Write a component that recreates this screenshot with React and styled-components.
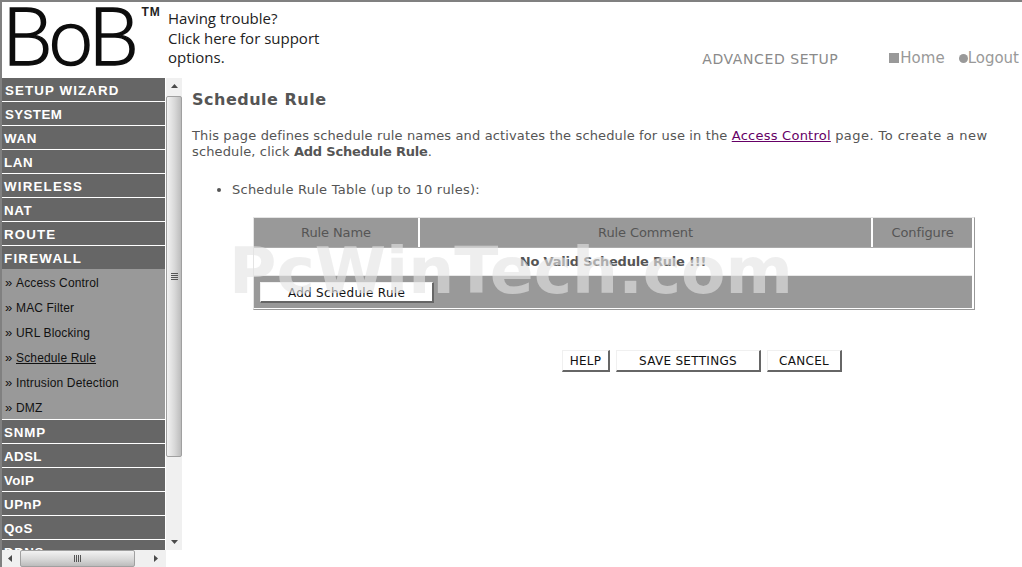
import React from "react";
import styled, { createGlobalStyle } from "styled-components";

const GlobalStyle = createGlobalStyle`
  html, body {
    margin: 0;
    padding: 0;
    background: #fff;
    overflow: hidden;
  }
`;

const topItems = [
  { label: "SETUP WIZARD", spacing: 1.1, indent: 3 },
  { label: "SYSTEM", spacing: 0.4, indent: 3 },
  { label: "WAN", spacing: 0.6 },
  { label: "LAN", spacing: 0.6 },
  { label: "WIRELESS", spacing: 1.2 },
  { label: "NAT", spacing: 0.6 },
  { label: "ROUTE", spacing: 1.1 },
];
const firewallItems = ["Access Control", "MAC Filter", "URL Blocking", "Schedule Rule", "Intrusion Detection", "DMZ"];
const bottomItems = [
  { label: "SNMP", spacing: 0.9 },
  { label: "ADSL", spacing: 0.4 },
  { label: "VoIP", spacing: 0.4 },
  { label: "UPnP", spacing: 0.5 },
  { label: "QoS", spacing: 0.5 },
  { label: "DDNS", spacing: 0.5 },
];

const Arrow = ({ dir }) => {
  const points = {
    up: "0,4 7,4 3.5,0",
    down: "0,0 7,0 3.5,4",
    left: "4,0 4,7 0,3.5",
    right: "0,0 0,7 4,3.5",
  };
  return (
    <svg width="7" height="7" viewBox="0 0 7 7">
      <polygon points={points[dir]} fill="#4a4a4a" />
    </svg>
  );
};

const App = () => {
  return (
    <Page>
      <GlobalStyle />
      <Header>
        <LogoWrap>
          <Logo>BoB</Logo>
          <Tm>TM</Tm>
        </LogoWrap>
        <Support>
          Having trouble?
          <br />
          Click here for support
          <br />
          options.
        </Support>
        <HeaderRight>
          <Advanced>ADVANCED SETUP</Advanced>
          <HeaderLink>
            <SquareMark />
            Home
          </HeaderLink>
          <HeaderLink>
            <RoundMark />
            Logout
          </HeaderLink>
        </HeaderRight>
      </Header>
      <Body>
        <SideColumn>
          <SideTop>
            <Menu>
              {topItems.map((item) => (
                <MenuItem key={item.label} $spacing={item.spacing} $indent={item.indent}>
                  {item.label}
                </MenuItem>
              ))}
              <FirewallItem $spacing={1.25}>FIREWALL</FirewallItem>
              <SubMenu>
                {firewallItems.map((item) => (
                  <SubItem key={item}>
                    <Quote>»</Quote>
                    <SubLabel $active={item === "Schedule Rule"}>{item}</SubLabel>
                  </SubItem>
                ))}
              </SubMenu>
              {bottomItems.map((item) => (
                <MenuItem key={item.label} $spacing={item.spacing}>
                  {item.label}
                </MenuItem>
              ))}
            </Menu>
            <VScroll>
              <ScrollButton $h={18}>
                <Arrow dir="up" />
              </ScrollButton>
              <VThumb>
                <Grip $vertical />
              </VThumb>
              <ScrollFill />
              <ScrollButton $h={14}>
                <Arrow dir="down" />
              </ScrollButton>
            </VScroll>
          </SideTop>
          <HScroll>
            <HButton>
              <Arrow dir="left" />
            </HButton>
            <HThumb>
              <Grip />
            </HThumb>
            <ScrollFill />
            <HButton>
              <Arrow dir="right" />
            </HButton>
            <Corner />
          </HScroll>
        </SideColumn>
        <Content>
          <Title>Schedule Rule</Title>
          <Intro>
            This page defines schedule rule names and activates the schedule for use in the{" "}
            <IntroLink>Access Control</IntroLink> <IntroTail>page. To create a new</IntroTail> schedule, click{" "}
            <strong>Add Schedule Rule</strong>.
          </Intro>
          <BulletList>
            <li>Schedule Rule Table (up to 10 rules):</li>
          </BulletList>
          <RuleTable>
            <HeadRow>
              <HeadCell>Rule Name</HeadCell>
              <HeadCell>Rule Comment</HeadCell>
              <HeadCell>Configure</HeadCell>
            </HeadRow>
            <EmptyRow>No Valid Schedule Rule !!!</EmptyRow>
            <ActionRow>
              <AddButton>Add Schedule Rule</AddButton>
            </ActionRow>
          </RuleTable>
          <ButtonRow>
            <PlainButton $w={48}>HELP</PlainButton>
            <PlainButton $w={145}>SAVE SETTINGS</PlainButton>
            <PlainButton $w={75}>CANCEL</PlainButton>
          </ButtonRow>
        </Content>
      </Body>
      <Watermark>PcWinTech.com</Watermark>
    </Page>
  );
};

const Page = styled.div`
  position: relative;
  width: 1022px;
  height: 567px;
  box-sizing: border-box;
  border-top: 2px solid #808080;
  border-left: 2px solid #808080;
  overflow: hidden;
  display: flex;
  flex-direction: column;
  font-family: "DejaVu Sans", Verdana, sans-serif;
`;

const Header = styled.div`
  height: 76px;
  flex: none;
  display: flex;
`;

const LogoWrap = styled.div`
  width: 164px;
  flex: none;
  display: flex;
  align-items: flex-start;
  overflow: hidden;
`;

const Logo = styled.div`
  font-family: "Lato", sans-serif;
  font-weight: 300;
  font-size: 80px;
  line-height: 64px;
  letter-spacing: -3.5px;
  color: #0d0d0d;
  -webkit-text-stroke: 1.5px #0d0d0d;
`;

const Tm = styled.div`
  font-family: "Liberation Sans", Arial, sans-serif;
  font-weight: 700;
  font-size: 12px;
  line-height: 11px;
  letter-spacing: 1px;
  color: #222;
  margin: 5px 0 0 6px;
`;

const Support = styled.div`
  font-family: "Open Sans", sans-serif;
  font-size: 15px;
  line-height: 19.5px;
  color: #222;
  margin: 7px 0 0 2px;
  white-space: nowrap;
`;

const HeaderRight = styled.div`
  margin-left: auto;
  height: 100%;
  box-sizing: border-box;
  display: flex;
  align-items: flex-end;
  padding: 0 3px 10px 0;
  color: #888;
`;

const Advanced = styled.div`
  font-size: 14px;
  line-height: 18px;
  letter-spacing: 0.6px;
  margin-right: 51px;
  color: #8a8a8a;
`;

const HeaderLink = styled.div`
  font-size: 15px;
  line-height: 20px;
  margin-right: 14px;
  display: flex;
  align-items: center;
  color: #999;
  &:last-child {
    margin-right: 0;
  }
`;

const SquareMark = styled.span`
  width: 10px;
  height: 10px;
  background: #999;
  margin-right: 1px;
`;

const RoundMark = styled.span`
  width: 9px;
  height: 9px;
  border-radius: 50%;
  background: #999;
`;

const Body = styled.div`
  flex: 1;
  min-height: 0;
  display: flex;
`;

const SideColumn = styled.div`
  width: 180px;
  flex: none;
  display: flex;
  flex-direction: column;
`;

const SideTop = styled.div`
  height: 472px;
  flex: none;
  display: flex;
`;

const Menu = styled.div`
  width: 163px;
  flex: none;
  height: 100%;
  overflow: hidden;
  margin-right: 1px;
`;

const MenuItem = styled.div`
  height: 23px;
  margin-bottom: 1px;
  padding-left: ${(p) => p.$indent || 2}px;
  background: #666;
  color: #fff;
  font-family: "Liberation Sans", Arial, sans-serif;
  font-weight: 700;
  font-size: 13.33px;
  line-height: 25px;
  overflow: hidden;
  letter-spacing: ${(p) => p.$spacing}px;
`;

const FirewallItem = styled(MenuItem)`
  margin-bottom: 0;
`;

const SubMenu = styled.div`
  background: #999;
  margin-bottom: 1px;
`;

const SubItem = styled.div`
  height: 25px;
  padding-top: 2px;
  box-sizing: border-box;
  display: flex;
  align-items: center;
  padding-left: 3px;
  font-family: "Liberation Sans", Arial, sans-serif;
  font-size: 12px;
  letter-spacing: 0.15px;
  color: #111;
`;

const Quote = styled.span`
  width: 11px;
  font-size: 13px;
`;

const SubLabel = styled.span`
  text-decoration: ${(p) => (p.$active ? "underline" : "none")};
`;

const VScroll = styled.div`
  width: 16px;
  flex: none;
  background: #f0f0f0;
  display: flex;
  flex-direction: column;
`;

const ScrollButton = styled.div`
  height: ${(p) => p.$h}px;
  flex: none;
  display: flex;
  align-items: center;
  justify-content: center;
`;

const VThumb = styled.div`
  height: 361px;
  flex: none;
  box-sizing: border-box;
  border: 1px solid #a0a0a0;
  border-radius: 2px;
  background: linear-gradient(to right, #f2f2f2, #d8d8d8 55%, #bcbcbc);
  display: flex;
  align-items: center;
  justify-content: center;
`;

const ScrollFill = styled.div`
  flex: 1;
`;

const Grip = styled.div`
  width: 7px;
  height: 7px;
  background: repeating-linear-gradient(
    ${(p) => (p.$vertical ? "to bottom" : "to right")},
    #555 0 1px,
    transparent 1px 2px
  );
`;

const HScroll = styled.div`
  flex: 1;
  display: flex;
  background: #f0f0f0;
`;

const HButton = styled.div`
  width: 18px;
  flex: none;
  display: flex;
  align-items: center;
  justify-content: center;
`;

const HThumb = styled.div`
  width: 115px;
  flex: none;
  box-sizing: border-box;
  border: 1px solid #a0a0a0;
  border-radius: 2px;
  background: linear-gradient(to bottom, #f2f2f2, #d8d8d8 55%, #bcbcbc);
  display: flex;
  align-items: center;
  justify-content: center;
`;

const Corner = styled.div`
  width: 16px;
  flex: none;
  background: #fff;
`;

const Content = styled.div`
  flex: 1;
  min-width: 0;
  padding: 12px 28px 0 10px;
  color: #555;
  font-size: 13px;
  line-height: 16px;
`;

const Title = styled.h1`
  margin: 0 0 18px;
  font-size: 16px;
  line-height: 20px;
  letter-spacing: 0.5px;
  font-weight: 700;
  color: #555;
`;

const Intro = styled.p`
  margin: 0 0 22px;
  letter-spacing: 0.135px;
  strong {
    font-weight: 700;
    letter-spacing: -0.2px;
  }
`;

const IntroLink = styled.span`
  color: #660066;
  letter-spacing: 0.25px;
  text-decoration: underline;
`;

const IntroTail = styled.span`
  letter-spacing: 0.45px;
`;

const BulletList = styled.ul`
  margin: 0 0 19px;
  padding-left: 40px;
  letter-spacing: 0.24px;
`;

const RuleTable = styled.div`
  width: 722px;
  height: 93px;
  margin-left: 61px;
  box-sizing: border-box;
  border: 1px solid;
  border-color: #e4e4e4 #999 #999 #e4e4e4;
  padding: 0 2px 1px 0;
  display: flex;
  flex-direction: column;
`;

const HeadRow = styled.div`
  height: 27px;
  flex: none;
  display: grid;
  grid-template-columns: 164px 451px 99px;
  column-gap: 2px;
`;

const HeadCell = styled.div`
  background: #999;
  color: #555;
  text-align: center;
  letter-spacing: -0.1px;
  line-height: 29px;
`;

const EmptyRow = styled.div`
  height: 29px;
  flex: none;
  margin-top: 2px;
  box-sizing: border-box;
  border-top: 1px solid #aaa;
  border-bottom: 1px solid #e8e8e8;
  font-weight: 700;
  letter-spacing: -0.2px;
  color: #555;
  text-align: center;
  line-height: 28px;
`;

const ActionRow = styled.div`
  flex: 1;
  background: #999;
  padding: 6px 0 0 6px;
`;

const AddButton = styled.button`
  display: block;
  width: 174px;
  height: 21px;
  padding: 1px 0 0;
  box-sizing: border-box;
  background: #fff;
  border: 1px solid;
  border-color: #f0f0f0 #666 #666 #f0f0f0;
  border-width: 1px 2px 2px 1px;
  color: #111;
  font-family: "DejaVu Sans", Verdana, sans-serif;
  font-size: 12px;
  letter-spacing: 0.3px;
  line-height: 16px;
`;

const ButtonRow = styled.div`
  margin: 40px 0 0 370px;
  display: flex;
  gap: 6px;
`;

const PlainButton = styled(AddButton)`
  width: ${(p) => p.$w}px;
  height: 22px;
`;

const Watermark = styled.div`
  position: absolute;
  left: 227px;
  top: 231px;
  font-family: "DejaVu Sans", Verdana, sans-serif;
  font-weight: 700;
  font-size: 64.7px;
  line-height: 76px;
  color: rgba(227, 227, 227, 0.62);
  white-space: nowrap;
  pointer-events: none;
`;

export default App;
